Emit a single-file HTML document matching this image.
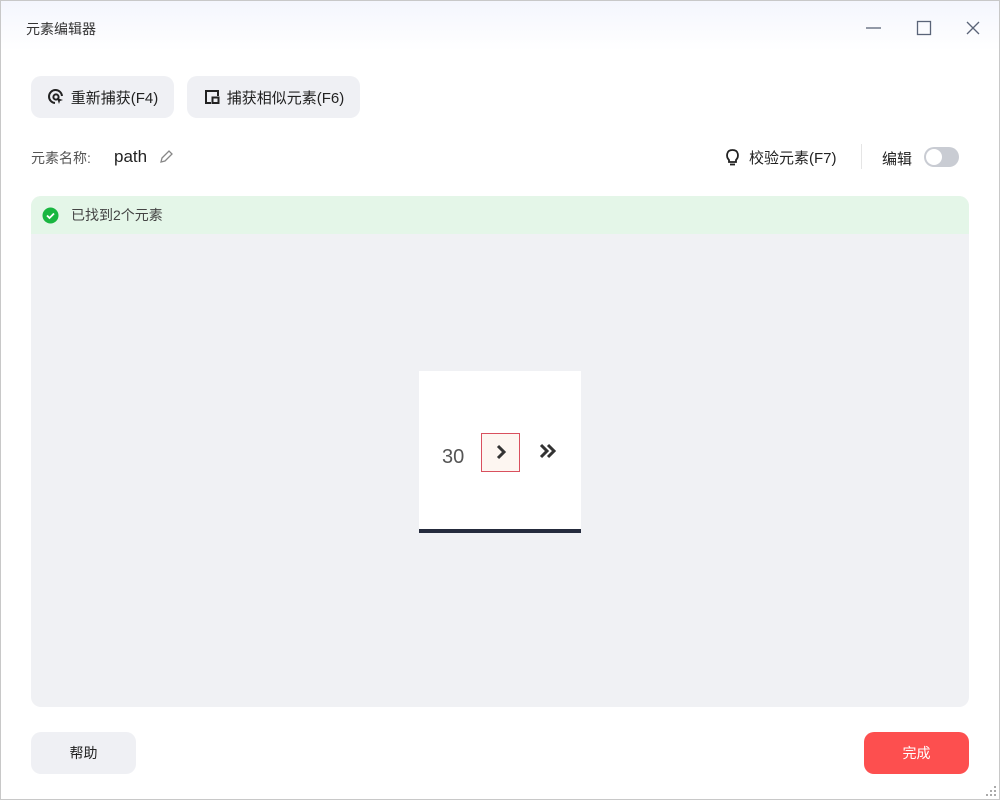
<!DOCTYPE html>
<html><head><meta charset="utf-8"><style>
*{margin:0;padding:0;box-sizing:border-box}
body{width:1000px;height:800px;overflow:hidden;background:#fff;font-family:"Liberation Sans","Noto Sans CJK SC",sans-serif;color:#333;position:relative}
.frame{position:absolute;inset:0;border:1px solid #c8c8c8;background:linear-gradient(#f4f6fd 0,#fff 50px,#fff 100%)}
.abs{position:absolute}
.btn{position:absolute;background:#eff0f4;border-radius:10px;font-size:14px;color:#222;display:flex;align-items:center;justify-content:center;gap:6px}
</style></head><body><div class="frame"></div>
<div class="abs" style="left:26px;top:19px;font-size:14px;color:#333">元素编辑器</div>
<svg class="abs" style="left:864px;top:18px" width="120" height="20"><line x1="2" y1="10" x2="17" y2="10" stroke="#5a6478" stroke-width="1.3"/><rect x="53.5" y="3.5" width="13" height="13" fill="none" stroke="#5a6478" stroke-width="1.3"/><path d="M103 4L115 16M115 4L103 16" stroke="#5a6478" stroke-width="1.3"/></svg>
<div class="btn" style="left:31px;top:76px;width:143px;height:42px;font-size:15px"><svg width="18" height="18" viewBox="0 0 18 18"><path d="M15 8A6.5 6.5 0 1 0 8 15" fill="none" stroke="#222" stroke-width="2"/><circle cx="9" cy="9" r="2.6" fill="none" stroke="#222" stroke-width="2"/><path d="M10 10L16 12L13 13L12 16Z" fill="#222"/></svg>重新捕获(F4)</div>
<div class="btn" style="left:187px;top:76px;width:173px;height:42px;font-size:15px"><svg width="18" height="18" viewBox="0 0 18 18"><path d="M8 15H3V3H15V8" fill="none" stroke="#222" stroke-width="2"/><rect x="9.5" y="9.5" width="6" height="5.5" fill="none" stroke="#222" stroke-width="2"/></svg>捕获相似元素(F6)</div>
<div class="abs" style="left:31px;top:148px;font-size:14px;color:#555">元素名称:</div>
<div class="abs" style="left:114px;top:147px;font-size:17px;color:#222">path</div>
<svg class="abs" style="left:158px;top:148px" width="17" height="17" viewBox="0 0 17 17"><path d="M3 14L4 10L11 3L14 6L7 13Z" fill="none" stroke="#888" stroke-width="1.3"/></svg>
<svg class="abs" style="left:724px;top:147px" width="17" height="20" viewBox="0 0 17 20"><path d="M5 13C2 10 2 3 8.5 3S15 10 12 13V15H5Z" fill="none" stroke="#222" stroke-width="1.8"/><line x1="6" y1="17.5" x2="11" y2="17.5" stroke="#222" stroke-width="1.8"/></svg>
<div class="abs" style="left:749px;top:147px;font-size:15px;color:#222">校验元素(F7)</div>
<div class="abs" style="left:861px;top:144px;width:1px;height:25px;background:#e5e5e5"></div>
<div class="abs" style="left:882px;top:148px;font-size:15px;color:#222">编辑</div>
<div class="abs" style="left:924px;top:147px;width:35px;height:20px;border-radius:10px;background:#c9ccd3"><div style="position:absolute;left:2px;top:2px;width:16px;height:16px;border-radius:50%;background:#fff"></div></div>
<div class="abs" style="left:31px;top:196px;width:938px;height:511px;border-radius:10px;background:#f0f1f4;overflow:hidden">
<div style="height:38px;background:#e4f6e8;display:flex;align-items:center;padding-left:11px;font-size:14px;color:#444"><svg width="17" height="17" viewBox="0 0 17 17"><circle cx="8.5" cy="8.5" r="8" fill="#19b641"/><path d="M5 8.5L7.5 11L12 6.5" fill="none" stroke="#fff" stroke-width="1.8"/></svg><span style="margin-left:12px">已找到2个元素</span></div>
<div style="position:absolute;left:388px;top:175px;width:162px;height:162px;background:#fff">
<div style="position:absolute;left:23px;top:75px;font-size:20px;color:#555">30</div>
<div style="position:absolute;left:62px;top:62px;width:39px;height:39px;border:1.5px solid #d9505e;background:#fdf6f1"></div>
<svg style="position:absolute;left:62px;top:62px" width="100" height="39"><path d="M17 13L23 19L17 25" fill="none" stroke="#333" stroke-width="3"/><path d="M60 12L66 18L60 24M67 12L73 18L67 24" fill="none" stroke="#333" stroke-width="3"/></svg>
<div style="position:absolute;left:0;bottom:0;width:162px;height:4px;background:#252b3d"></div>
</div></div>
<div class="btn" style="left:31px;top:732px;width:105px;height:42px">帮助</div>
<div class="btn" style="left:864px;top:732px;width:105px;height:42px;background:#fd4f4f;color:#fff">完成</div>
<svg class="abs" style="left:984px;top:784px" width="14" height="14"><g fill="#aaa"><rect x="10" y="2" width="2" height="2"/><rect x="6" y="6" width="2" height="2"/><rect x="10" y="6" width="2" height="2"/><rect x="2" y="10" width="2" height="2"/><rect x="6" y="10" width="2" height="2"/><rect x="10" y="10" width="2" height="2"/></g></svg>
</body></html>
